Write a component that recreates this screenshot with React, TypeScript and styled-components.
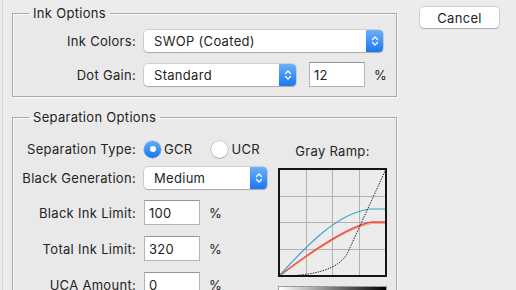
import React from "react";
import styled, { createGlobalStyle } from "styled-components";

const GlobalStyle = createGlobalStyle`
  html, body { margin: 0; padding: 0; background: #ececec; }
  body {
    font-family: Inter, "Liberation Sans", sans-serif;
    font-size: 13px;
    letter-spacing: 0.3px;
    color: #242424;
    -webkit-font-smoothing: antialiased;
  }
`;

const Page = styled.div`
  display: flex;
  align-items: flex-start;
  width: 514px;
  height: 290px;
  overflow: hidden;
  box-sizing: border-box;
  margin-left: 2px;
  border-left: 1px solid #d6d6d6;
  padding-left: 9px;
`;

const Main = styled.div`
  display: flex;
  flex-direction: column;
  width: 385px;
  padding-top: 5px;
  gap: 12px;
`;

const Side = styled.div`
  padding: 7px 0 0 23px;
`;

const Group = styled.fieldset`
  margin: 0;
  padding: 0;
  min-width: 0;
  border: 1px solid #a8a8a8;
  box-shadow: inset 1px 1px 0 #fbfbfb, 1px 1px 0 #fbfbfb;
  background: #e9e9e9;
`;

const GroupTitle = styled.legend`
  margin-left: 16px;
  padding: 0 4px;
  font-size: 13px;
  line-height: 16px;
  color: #222;
`;

const Form = styled.div<{ $pt: number; $pb?: number }>`
  display: flex;
  flex-direction: column;
  padding: ${(p) => p.$pt}px 0 ${(p) => p.$pb ?? 0}px 0;
`;

const Row = styled.div<{ $h: number; $mt?: number }>`
  display: grid;
  grid-template-columns: 123px 1fr;
  column-gap: 8px;
  align-items: center;
  height: ${(p) => p.$h}px;
  margin-top: ${(p) => p.$mt ?? 0}px;
`;

const Label = styled.span`
  text-align: right;
  white-space: nowrap;
  line-height: 16px;
`;

const Controls = styled.div<{ $gap?: number }>`
  display: flex;
  align-items: center;
  gap: ${(p) => p.$gap ?? 0}px;
`;

const Popup = styled.div<{ $w: number }>`
  width: ${(p) => p.$w}px;
  height: 22px;
  box-sizing: border-box;
  display: flex;
  align-items: center;
  background: #fff;
  border-radius: 4px;
  box-shadow: 0 0 0 0.5px rgba(0, 0, 0, 0.22), 0 1px 1px rgba(0, 0, 0, 0.18);
  overflow: hidden;
`;

const PopupText = styled.span`
  flex: 1;
  padding-left: 10px;
  line-height: 16px;
  white-space: nowrap;
`;

const PopupArrow = styled.span`
  width: 17px;
  align-self: stretch;
  display: flex;
  align-items: center;
  justify-content: center;
  background: linear-gradient(#69b1fb, #1c76f1);
`;

const TextBox = styled.input<{ $ml?: number }>`
  width: 56px;
  height: 25px;
  box-sizing: border-box;
  margin: 0 0 0 ${(p) => p.$ml ?? 0}px;
  padding: 0 0 0 4px;
  border: 1px solid #b4b4b4;
  border-top-color: #959595;
  background: #fff;
  font: inherit;
  letter-spacing: inherit;
  color: #222;
  outline: none;
`;

const Unit = styled.span<{ $ml: number }>`
  margin-left: ${(p) => p.$ml}px;
`;

const RadioOption = styled.label<{ $mr?: number }>`
  display: flex;
  align-items: center;
  gap: 3px;
  margin-right: ${(p) => p.$mr ?? 0}px;
`;

const RadioDot = styled.span<{ $on: boolean }>`
  width: 17px;
  height: 17px;
  box-sizing: border-box;
  border-radius: 50%;
  display: flex;
  align-items: center;
  justify-content: center;
  background: ${(p) => (p.$on ? "linear-gradient(#5faafb, #1a77f2)" : "#fff")};
  box-shadow: ${(p) =>
    p.$on
      ? "0 0 0 0.5px rgba(20,90,200,0.5)"
      : "0 0 0 0.5px rgba(0,0,0,0.28), 0 1px 1px rgba(0,0,0,0.12)"};
`;

const RadioPip = styled.span`
  width: 6px;
  height: 6px;
  border-radius: 50%;
  background: #fff;
`;

const SepBody = styled.div`
  display: flex;
  align-items: flex-start;
`;

const RampColumn = styled.div`
  margin-left: auto;
  margin-right: 9px;
  width: 109px;
  display: flex;
  flex-direction: column;
  align-items: center;
  padding-top: 18px;
`;

const RampTitle = styled.div`
  line-height: 16px;
  white-space: nowrap;
`;

const RampChart = styled.svg`
  display: block;
  margin-top: 9px;
`;

const RampBar = styled.div`
  margin-top: 9px;
  width: 109px;
  height: 12px;
  box-sizing: border-box;
  border: 1px solid #9c9c9c;
  background: linear-gradient(to right, #fff, #000);
`;

const CancelButton = styled.button`
  width: 79px;
  height: 21px;
  padding: 0;
  border: none;
  border-radius: 4px;
  background: #fff;
  box-shadow: 0 0 0 0.5px rgba(0, 0, 0, 0.25), 0 1px 1px rgba(0, 0, 0, 0.18);
  font: inherit;
  letter-spacing: inherit;
  color: #222;
`;

const Chevrons = () => (
  <svg width="8" height="12" viewBox="0 0 8 12" fill="none">
    <path d="M1.5 4.5 L4 2 L6.5 4.5" stroke="#fff" strokeWidth="1.3" strokeLinecap="round" strokeLinejoin="round" />
    <path d="M1.5 7.5 L4 10 L6.5 7.5" stroke="#fff" strokeWidth="1.3" strokeLinecap="round" strokeLinejoin="round" />
  </svg>
);

const Select = ({ w, value }: { w: number; value: string }) => (
  <Popup $w={w}>
    <PopupText>{value}</PopupText>
    <PopupArrow>
      <Chevrons />
    </PopupArrow>
  </Popup>
);

const Radio = ({ on, label, mr }: { on: boolean; label: string; mr?: number }) => (
  <RadioOption $mr={mr}>
    <RadioDot $on={on}>{on && <RadioPip />}</RadioDot>
    {label}
  </RadioOption>
);

const GrayRamp = () => {
  const grid = [28, 54, 81];
  return (
    <RampChart width="109" height="109" viewBox="0 0 109 109">
      <rect x="0" y="0" width="109" height="109" fill="#ececec" />
      {grid.map((g) => (
        <React.Fragment key={g}>
          <line x1={g + 0.5} y1="0" x2={g + 0.5} y2="109" stroke="#b2b2b2" strokeWidth="1" />
          <line x1="0" y1={g + 0.5} x2="109" y2={g + 0.5} stroke="#b2b2b2" strokeWidth="1" />
        </React.Fragment>
      ))}
      <path d="M1 108.5 C 35 83.5 70 59.5 94 55.5 L108 55.5" fill="none" stroke="#f6b25a" strokeWidth="1.2" />
      <path d="M1 108 C 35 82 70 58 94 54 L108 54" fill="none" stroke="#e8475a" strokeWidth="1.3" />
      <path d="M1 108 C 30 76 60 45 92 41 L108 41" fill="none" stroke="#3ba3c6" strokeWidth="1.2" />
      <path d="M1 108 C 35 108 62 101.5 70 84 L108 1" fill="none" stroke="#1e1e1e" strokeWidth="1" strokeDasharray="1.4 1.2" />
      <rect x="1" y="1" width="107" height="107" fill="none" stroke="#151515" strokeWidth="2" />
    </RampChart>
  );
};

export default function App() {
  return (
    <>
      <GlobalStyle />
      <Page>
        <Main>
          <Group>
            <GroupTitle>Ink Options</GroupTitle>
            <Form $pt={9} $pb={9}>
              <Row $h={22}>
                <Label>Ink Colors:</Label>
                <Select w={239} value="SWOP (Coated)" />
              </Row>
              <Row $h={25} $mt={10}>
                <Label>Dot Gain:</Label>
                <Controls>
                  <Select w={152} value="Standard" />
                  <TextBox defaultValue="12" $ml={13} />
                  <Unit $ml={9}>%</Unit>
                </Controls>
              </Row>
            </Form>
          </Group>
          <Group>
            <GroupTitle>Separation Options</GroupTitle>
            <SepBody>
              <Form $pt={15} $pb={20}>
                <Row $h={18}>
                  <Label>Separation Type:</Label>
                  <Controls>
                    <Radio on label="GCR" mr={19} />
                    <Radio on={false} label="UCR" />
                  </Controls>
                </Row>
                <Row $h={22} $mt={9}>
                  <Label>Black Generation:</Label>
                  <Select w={123} value="Medium" />
                </Row>
                <Row $h={25} $mt={11}>
                  <Label>Black Ink Limit:</Label>
                  <Controls>
                    <TextBox defaultValue="100" />
                    <Unit $ml={9}>%</Unit>
                  </Controls>
                </Row>
                <Row $h={25} $mt={11}>
                  <Label>Total Ink Limit:</Label>
                  <Controls>
                    <TextBox defaultValue="320" />
                    <Unit $ml={9}>%</Unit>
                  </Controls>
                </Row>
                <Row $h={25} $mt={11}>
                  <Label>UCA Amount:</Label>
                  <Controls>
                    <TextBox defaultValue="0" />
                    <Unit $ml={9}>%</Unit>
                  </Controls>
                </Row>
              </Form>
              <RampColumn>
                <RampTitle>Gray Ramp:</RampTitle>
                <GrayRamp />
                <RampBar />
              </RampColumn>
            </SepBody>
          </Group>
        </Main>
        <Side>
          <CancelButton>Cancel</CancelButton>
        </Side>
      </Page>
    </>
  );
}
